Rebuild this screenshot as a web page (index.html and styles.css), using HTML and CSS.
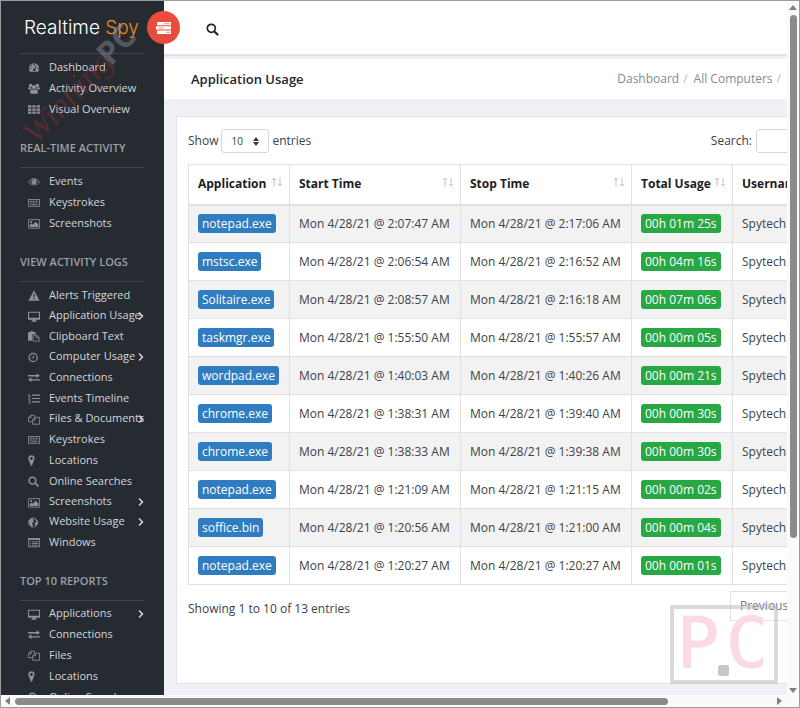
FILE: index.html
```html
<!DOCTYPE html>
<html lang="en">
<head>
<meta charset="utf-8">
<title>Application Usage</title>
<link rel="stylesheet" href="styles.css">
</head>
<body>
<svg class="defs" aria-hidden="true">
  <symbol id="gauge" viewBox="0 0 14 12"><path fill="currentColor" fill-rule="evenodd" d="M7 1a6 6 0 0 0-6 6c0 1.500.4 2.700 1.200 4h9.600A6.500 6.500 0 0 0 13 7a6 6 0 0 0-6-6zM6.300 2h1.500v1.500H6.300zM3.300 3.300h1.500v1.500H3.300zM2 6.300h1.500v1.500H2zM10.600 6.300h1.500v1.500h-1.500zM9 3.500l.8.400-1.500 3.600a1.500 1.500 0 1 1-.9-.3z"/></symbol>
  <symbol id="users" viewBox="0 0 14 12"><g fill="currentColor"><circle cx="3" cy="2.500" r="1.900"/><circle cx="11" cy="2.500" r="1.900"/><circle cx="7" cy="4.400" r="2.400"/><path d="M0 5.500c0-1 1-1.200 3.600-.8C3.500 6 4 6.800 4.400 7H0zM14 5.500c0-1-1-1.200-3.600-.8.1 1.300-.4 2.100-.8 2.300H14zM2.800 12c-.8-3 .3-5 2-5a4 4 0 0 0 4.400 0c1.700 0 2.800 2 2 5z"/></g></symbol>
  <symbol id="cells" viewBox="0 0 14 12"><path fill="currentColor" d="M0 1h4v2.700H0zM5 1h4v2.700H5zM10 1h4v2.700h-4zM0 4.700h4v2.700H0zM5 4.700h4v2.700H5zM10 4.700h4v2.700h-4zM0 8.400h4V11H0zM5 8.400h4V11H5zM10 8.400h4V11h-4z"/></symbol>
  <symbol id="eye" viewBox="0 0 14 12"><path fill="none" stroke="currentColor" d="M.7 6.500C3.500 1.500 10.500 1.500 13.300 6.500 10.500 11 3.500 11 .7 6.500z"/><circle cx="7" cy="6" r="3" fill="currentColor"/><path d="M5.500 6A1.500 1.500 0 0 1 7 4.500" fill="none" stroke="#262a31" stroke-width=".7"/></symbol>
  <symbol id="keys" viewBox="0 0 14 12"><path fill="none" stroke="currentColor" d="M.5 2.500h13v8H.5z"/><path stroke="currentColor" stroke-width="1.300" stroke-dasharray="1.200 .7" d="M2 4.700h10M2 6.600h10"/><path stroke="currentColor" d="M2 8.500h1.200M4 8.500h6M11 8.500h1"/></symbol>
  <symbol id="image" viewBox="0 0 14 12"><path fill="none" stroke="currentColor" d="M.5 1.500h13v10H.5z"/><circle cx="3.700" cy="4.300" r="1.200" fill="currentColor"/><path fill="currentColor" d="M2 10V8l2-2 1.500 1.500L9 4l3 3v3z"/></symbol>
  <symbol id="alert" viewBox="0 0 14 12"><path fill="currentColor" fill-rule="evenodd" d="M7 0l6.500 12H.5zM6.200 4l.3 4h1l.3-4zM6.200 9v1.500h1.600V9z"/></symbol>
  <symbol id="screen" viewBox="0 0 14 12"><path fill="none" stroke="currentColor" stroke-width="1.200" d="M.6 1.100h12.800v8H.6z"/><path fill="currentColor" d="M0 7.500h14V9H0zM5.500 9h3l.5 2h1v1H4v-1h1z"/></symbol>
  <symbol id="paste" viewBox="0 0 14 12"><path fill="currentColor" d="M0 1h2.500V0h4v1H9v2.500H5V11H0z"/><path fill="none" stroke="currentColor" d="M6 4.500h4l3 2.500v4.500H6zM9.500 4.500v3H13"/></symbol>
  <symbol id="clock" viewBox="0 0 14 12"><circle cx="6" cy="6" r="4.800" fill="none" stroke="currentColor" stroke-width="1.400"/><path fill="none" stroke="currentColor" d="M6.500 3.500v3H4"/></symbol>
  <symbol id="swap" viewBox="0 0 14 12"><path fill="currentColor" d="M0 3.200h10V1l4 3-4 2.500V4.700H0zM14 8H4V5.800L0 8.700l4 2.600V9.500h10z"/></symbol>
  <symbol id="list" viewBox="0 0 14 12"><path stroke="currentColor" stroke-width="1.300" d="M4.500 2H14M4.500 6H14M4.500 10H14"/><path stroke="currentColor" fill="none" stroke-width=".9" d="M.5 1h1v2.500M0 3.500h3M.5 5h1.500v1L.5 7.400H3M.5 8.800h2L1.500 10h1v1.500h-2"/></symbol>
  <symbol id="files" viewBox="0 0 14 12"><path fill="none" stroke="currentColor" d="M5.500 8.500h-5V4l3-3h4v2.500M3.500 1v3h-3M5.500 11.500V6l3-2.500h5v8zM8.500 3.500v3h-3"/></symbol>
  <symbol id="pin" viewBox="0 0 14 12"><path fill="currentColor" fill-rule="evenodd" d="M4 0a3.700 3.700 0 0 0-3.700 3.700C.3 5.500 2.500 8.500 3.300 12h1.400c.8-3.500 3-6.500 3-8.300A3.700 3.700 0 0 0 4 0zm0 2a1.700 1.700 0 1 1 0 3.400A1.700 1.700 0 0 1 4 2z"/></symbol>
  <symbol id="search" viewBox="0 0 14 12"><circle cx="5.200" cy="5" r="4" fill="none" stroke="currentColor" stroke-width="1.700"/><path stroke="currentColor" stroke-width="2" stroke-linecap="round" d="M8.500 8l3 3"/></symbol>
  <symbol id="globe" viewBox="0 0 14 12"><circle cx="6" cy="6" r="5.300" fill="none" stroke="currentColor"/><path fill="currentColor" d="M1 4l3-3 3 .5-1 2L7 5 4.500 6.500 6 9l-1.500 2L2 9zM8 2l3 2 .3 3.500L9 10 7.500 7 10 5z"/></symbol>
  <symbol id="window" viewBox="0 0 14 12"><path fill="none" stroke="currentColor" d="M.5 1.500h13v9.500H.5z"/><path stroke="currentColor" stroke-width="2" d="M0 2h14"/><path stroke="currentColor" d="M2 5.200h1.200M4.500 5.200H12M2 7.200h1.200M4.500 7.200H12M2 9.200h1.200M4.500 9.200H12"/></symbol>
  <symbol id="chevron" viewBox="0 0 6 10"><path fill="none" stroke="currentColor" stroke-width="1.500" d="M1 1.500L4.500 5 1 8.500"/></symbol>
  <symbol id="sort" viewBox="0 0 12 10"><path fill="none" stroke="currentColor" d="M3 9.500V1M1 3l2-2 2 2M9 .5V9M7 7l2 2 2-2"/></symbol>
</svg>

<div class="window">
  <div class="view">
    <aside class="sidebar">
      <a class="logo" href="#">Realtime <span>Spy</span></a>
      <button class="toggle" type="button" aria-label="Toggle menu">
        <svg viewBox="0 0 16 12"><path fill="#fff" d="M1 0h14v3.300H1zM0 4.300h15v3.300H0zM1 8.600h14V12H1z"/><path stroke="#e74c3c" d="M8 1.700h6M3 6h5M10 10.300h4" opacity=".6"/></svg>
      </button>
      <nav>
        <ul>
          <li><a href="#"><svg><use href="#gauge"/></svg>Dashboard</a></li>
          <li><a href="#"><svg><use href="#users"/></svg>Activity Overview</a></li>
          <li><a href="#"><svg><use href="#cells"/></svg>Visual Overview</a></li>
        </ul>
        <h2>REAL-TIME ACTIVITY</h2>
        <ul>
          <li><a href="#"><svg><use href="#eye"/></svg>Events</a></li>
          <li><a href="#"><svg><use href="#keys"/></svg>Keystrokes</a></li>
          <li><a href="#"><svg><use href="#image"/></svg>Screenshots</a></li>
        </ul>
        <h2>VIEW ACTIVITY LOGS</h2>
        <ul>
          <li><a href="#"><svg><use href="#alert"/></svg>Alerts Triggered</a></li>
          <li class="parent"><a href="#"><svg><use href="#screen"/></svg><span>Application Usage</span><svg class="chev"><use href="#chevron"/></svg></a></li>
          <li><a href="#"><svg><use href="#paste"/></svg>Clipboard Text</a></li>
          <li class="parent"><a href="#"><svg><use href="#clock"/></svg><span>Computer Usage</span><svg class="chev"><use href="#chevron"/></svg></a></li>
          <li><a href="#"><svg><use href="#swap"/></svg>Connections</a></li>
          <li><a href="#"><svg><use href="#list"/></svg>Events Timeline</a></li>
          <li class="parent"><a href="#"><svg><use href="#files"/></svg><span>Files &amp; Documents</span><svg class="chev"><use href="#chevron"/></svg></a></li>
          <li><a href="#"><svg><use href="#keys"/></svg>Keystrokes</a></li>
          <li><a href="#"><svg><use href="#pin"/></svg>Locations</a></li>
          <li><a href="#"><svg><use href="#search"/></svg>Online Searches</a></li>
          <li class="parent"><a href="#"><svg><use href="#image"/></svg><span>Screenshots</span><svg class="chev"><use href="#chevron"/></svg></a></li>
          <li class="parent"><a href="#"><svg><use href="#globe"/></svg><span>Website Usage</span><svg class="chev"><use href="#chevron"/></svg></a></li>
          <li><a href="#"><svg><use href="#window"/></svg>Windows</a></li>
        </ul>
        <h2>TOP 10 REPORTS</h2>
        <ul>
          <li class="parent"><a href="#"><svg><use href="#screen"/></svg><span>Applications</span><svg class="chev"><use href="#chevron"/></svg></a></li>
          <li><a href="#"><svg><use href="#swap"/></svg>Connections</a></li>
          <li><a href="#"><svg><use href="#files"/></svg>Files</a></li>
          <li><a href="#"><svg><use href="#pin"/></svg>Locations</a></li>
          <li><a href="#"><svg><use href="#search"/></svg>Online Searches</a></li>
        </ul>
      </nav>
      <svg class="stamp" viewBox="0 0 140 140" aria-hidden="true">
        <g transform="translate(36 145) rotate(-47)">
          <text class="stamp-script" x="0" y="0">Winning</text>
          <text class="stamp-pc" x="108" y="0">PC</text>
        </g>
      </svg>
    </aside>

    <div class="main">
      <div class="canvas">
        <header class="topbar">
          <button type="button" aria-label="Search"><svg viewBox="0 0 13 13"><circle cx="5.300" cy="5.300" r="4" fill="none" stroke="currentColor" stroke-width="1.700"/><path stroke="currentColor" stroke-width="2.200" stroke-linecap="round" d="M8.700 8.700l2.800 2.800"/></svg></button>
        </header>
        <div class="titlebar">
          <h1>Application Usage</h1>
          <nav class="crumbs"><a href="#">Dashboard</a><i>/</i><a href="#">All Computers</a><i>/</i></nav>
        </div>
        <section class="card">
          <div class="controls">
            <label>Show <select><option>10</option><option>25</option></select> entries</label>
            <label>Search: <input type="search"></label>
          </div>
          <table>
            <colgroup><col class="c-app"><col class="c-time"><col class="c-time"><col class="c-use"><col></colgroup>
            <thead>
              <tr>
                <th>Application<svg><use href="#sort"/></svg></th>
                <th>Start Time<svg><use href="#sort"/></svg></th>
                <th>Stop Time<svg><use href="#sort"/></svg></th>
                <th>Total Usage<svg><use href="#sort"/></svg></th>
                <th>Username</th>
              </tr>
            </thead>
            <tbody>
              <tr><td><b>notepad.exe</b></td><td>Mon 4/28/21 @ 2:07:47 AM</td><td>Mon 4/28/21 @ 2:17:06 AM</td><td><b class="time">00h 01m 25s</b></td><td>Spytech</td></tr>
              <tr><td><b>mstsc.exe</b></td><td>Mon 4/28/21 @ 2:06:54 AM</td><td>Mon 4/28/21 @ 2:16:52 AM</td><td><b class="time">00h 04m 16s</b></td><td>Spytech</td></tr>
              <tr><td><b>Solitaire.exe</b></td><td>Mon 4/28/21 @ 2:08:57 AM</td><td>Mon 4/28/21 @ 2:16:18 AM</td><td><b class="time">00h 07m 06s</b></td><td>Spytech</td></tr>
              <tr><td><b>taskmgr.exe</b></td><td>Mon 4/28/21 @ 1:55:50 AM</td><td>Mon 4/28/21 @ 1:55:57 AM</td><td><b class="time">00h 00m 05s</b></td><td>Spytech</td></tr>
              <tr><td><b>wordpad.exe</b></td><td>Mon 4/28/21 @ 1:40:03 AM</td><td>Mon 4/28/21 @ 1:40:26 AM</td><td><b class="time">00h 00m 21s</b></td><td>Spytech</td></tr>
              <tr><td><b>chrome.exe</b></td><td>Mon 4/28/21 @ 1:38:31 AM</td><td>Mon 4/28/21 @ 1:39:40 AM</td><td><b class="time">00h 00m 30s</b></td><td>Spytech</td></tr>
              <tr><td><b>chrome.exe</b></td><td>Mon 4/28/21 @ 1:38:33 AM</td><td>Mon 4/28/21 @ 1:39:38 AM</td><td><b class="time">00h 00m 30s</b></td><td>Spytech</td></tr>
              <tr><td><b>notepad.exe</b></td><td>Mon 4/28/21 @ 1:21:09 AM</td><td>Mon 4/28/21 @ 1:21:15 AM</td><td><b class="time">00h 00m 02s</b></td><td>Spytech</td></tr>
              <tr><td><b>soffice.bin</b></td><td>Mon 4/28/21 @ 1:20:56 AM</td><td>Mon 4/28/21 @ 1:21:00 AM</td><td><b class="time">00h 00m 04s</b></td><td>Spytech</td></tr>
              <tr><td><b>notepad.exe</b></td><td>Mon 4/28/21 @ 1:20:27 AM</td><td>Mon 4/28/21 @ 1:20:27 AM</td><td><b class="time">00h 00m 01s</b></td><td>Spytech</td></tr>
            </tbody>
          </table>
          <div class="footer">
            <p>Showing 1 to 10 of 13 entries</p>
            <button type="button">Previous</button>
          </div>
        </section>
      </div>
    </div>
  </div>
  <div class="vbar"><span class="arrow up"></span><span class="thumb"></span><span class="arrow down"></span></div>
  <div class="hbar"><span class="arrow left"></span><span class="thumb"></span><span class="arrow right"></span></div>
  <svg class="badge" viewBox="0 0 108 80" aria-hidden="true">
    <rect x="2" y="2" width="104" height="75" fill="none" stroke="#bbb" stroke-opacity=".55" stroke-width="4"/>
    <text x="7" y="62">P</text><text x="56" y="62">C</text>
    <rect x="48" y="60" width="11" height="11" rx="2" fill="#c7c7c9"/>
  </svg>
</div>
</body>
</html>
```
FILE: styles.css
```css
* { box-sizing: border-box; }
body {
  margin: 0;
  font-family: "Open Sans", "Noto Sans", sans-serif;
  font-size: 12px;
  line-height: 20px;
  color: #3c4248;
}
a { color: inherit; text-decoration: none; }
button, input, select { font: inherit; color: inherit; }
ul { list-style: none; margin: 0; padding: 0; }
.defs { position: absolute; width: 0; height: 0; }

.window {
  position: relative;
  display: grid;
  grid-template-columns: minmax(0, 1fr) 12px;
  grid-template-rows: minmax(0, 1fr) 12px;
  height: 100vh;
  border: 1px solid #9b9b9b;
  background: #fafafa;
  overflow: hidden;
}
.view { display: flex; overflow: hidden; background: #f0f1f7; }

/* Sidebar */
.sidebar {
  position: relative;
  flex: none;
  width: 163px;
  padding: 0 20px 0 19px;
  background: #262a31;
  color: #d3d6dc;
}
.logo {
  display: block;
  height: 52px;
  padding: 11px 0 0 4px;
  font: 300 19px/32px Inter, "Liberation Sans", sans-serif;
  color: #fff;
  white-space: nowrap;
}
.logo span { color: #e98a25; }
.toggle {
  position: absolute;
  z-index: 2;
  top: 10px;
  right: -16px;
  width: 33px;
  height: 33px;
  padding: 0;
  border: 0;
  border-radius: 50%;
  background: #e74c3c;
}
.toggle svg { display: block; width: 16px; height: 12px; margin: auto; }
.sidebar nav { font-size: 11px; }
.sidebar h2 {
  margin: 19px 0 9px;
  font-size: 11px;
  line-height: 20px;
  font-weight: 600;
  color: #9ca0aa;
  white-space: nowrap;
}
.sidebar ul { padding-top: 2px; border-top: 1px solid #41454d; }
.sidebar li a {
  display: flex;
  align-items: center;
  height: 21px;
  padding-left: 8px;
  white-space: nowrap;
}
.sidebar li.parent a { height: 20px; }
.sidebar li span { flex: 1; min-width: 0; }
.sidebar li svg { flex: none; width: 12px; height: 11px; margin: 2px 9px 0 0; color: #8d919c; }
.sidebar li .chev { width: 6px; height: 10px; margin: 1px 0 0; color: #d3d6dc; }
.stamp { position: absolute; left: 0; top: 0; width: 140px; height: 140px; overflow: visible; pointer-events: none; }
.stamp-script { font: italic 34px "Liberation Serif", serif; fill: #b03030; fill-opacity: .35; }
.stamp-pc { font: bold 32px "Open Sans", sans-serif; fill: #a0a4ac; fill-opacity: .4; }

/* Main column */
.main { flex: 1; min-width: 0; overflow: hidden; }
.canvas { display: flex; flex-direction: column; min-width: 680px; height: 100%; padding-bottom: 11px; }
.topbar { height: 55px; padding: 18px 42px; background: #fff; border-bottom: 2px solid #e0e2e9; }
.topbar button { display: block; padding: 4px 0; border: 0; background: none; color: #20242a; }
.topbar svg { display: block; width: 13px; height: 13px; }
.titlebar {
  display: flex;
  justify-content: space-between;
  align-items: center;
  height: 40px;
  margin: 3px 0 17px;
  padding: 0 57px 0 27px;
  background: #fff;
}
h1 { margin: 0; font-size: 13px; font-weight: 600; color: #22262c; }
.crumbs { color: #868b90; }
.crumbs i { margin: 0 6px 0 4px; font-style: normal; color: #b8bcc0; }
.card { flex: 1; margin: 0 12px; padding: 12px 11px 0; background: #fff; border: 1px solid #dfe2e8; }
.controls { display: flex; justify-content: space-between; height: 35px; }
.controls label { display: flex; gap: 4px; height: 24px; align-items: center; }
select, .controls input { height: 24px; border: 1px solid #d3d7dc; border-radius: 3px; background: #fff; }
select { appearance: none; width: 48px; padding: 0 9px; font-size: 10px; }
.controls label:first-child { position: relative; gap: 3px; }
.controls label:first-child::before,
.controls label:first-child::after {
  content: "";
  position: absolute;
  left: 65px;
  border: 3px solid transparent;
}
.controls label:first-child::before { top: 5px; border-bottom: 4px solid #30343a; }
.controls label:first-child::after { top: 13px; border-top: 4px solid #30343a; }
.controls input { width: 64px; }

table { width: 100%; table-layout: fixed; border-collapse: collapse; }
.c-app, .c-use { width: 101px; }
.c-time { width: 171px; }
th, td { padding: 0 9px; text-align: left; white-space: nowrap; border: 1px solid #dee2e6; }
th { height: 40px; font-weight: 700; color: #1c2026; border-bottom-width: 2px; }
th svg { float: right; width: 12px; height: 10px; margin: 3px -3px 0 0; color: #bfc3c7; }
td { height: 38px; }
tbody tr:nth-child(odd) { background: #f2f2f2; }
td b {
  display: inline-block;
  padding: 0 4px;
  line-height: 19px;
  border-radius: 3px;
  font-weight: 400;
  color: #fff;
  background: #2f7dc0;
}
td .time { background: #28a745; }
.footer { display: flex; justify-content: space-between; padding-top: 6px; }
.footer p { margin: 8px 0 0; }
.footer button { width: 90px; height: 30px; padding: 0 9px; text-align: left; border: 1px solid #dee2e6; background: #fff; color: #6c757d; }

/* Scrollbars */
.vbar, .hbar { display: flex; align-items: center; background: #fafafa; }
.vbar { flex-direction: column; padding: 4px 0 2px; }
.vbar .thumb { width: 7px; height: 76%; margin: 5px 0 auto 0; border-radius: 4px; background: #8b8b8b; }
.hbar { padding: 0 5px 0 4px; }
.hbar .thumb { width: 84%; height: 7px; margin: 0 auto 0 5px; border-radius: 4px; background: #8b8b8b; }
.arrow { border: 4px solid transparent; }
.up { border-top: 0; border-bottom: 5px solid #808080; }
.down { border-bottom: 0; border-top: 5px solid #808080; }
.left { border-left: 0; border-right: 5px solid #808080; }
.right { border-right: 0; border-left: 5px solid #808080; }

.badge { position: absolute; right: 21px; bottom: 22px; width: 108px; height: 80px; pointer-events: none; }
.badge text { font: 70px "DejaVu Sans Mono", monospace; fill: #fbdae2; stroke: #fbdae2; stroke-linejoin: round; }
```
